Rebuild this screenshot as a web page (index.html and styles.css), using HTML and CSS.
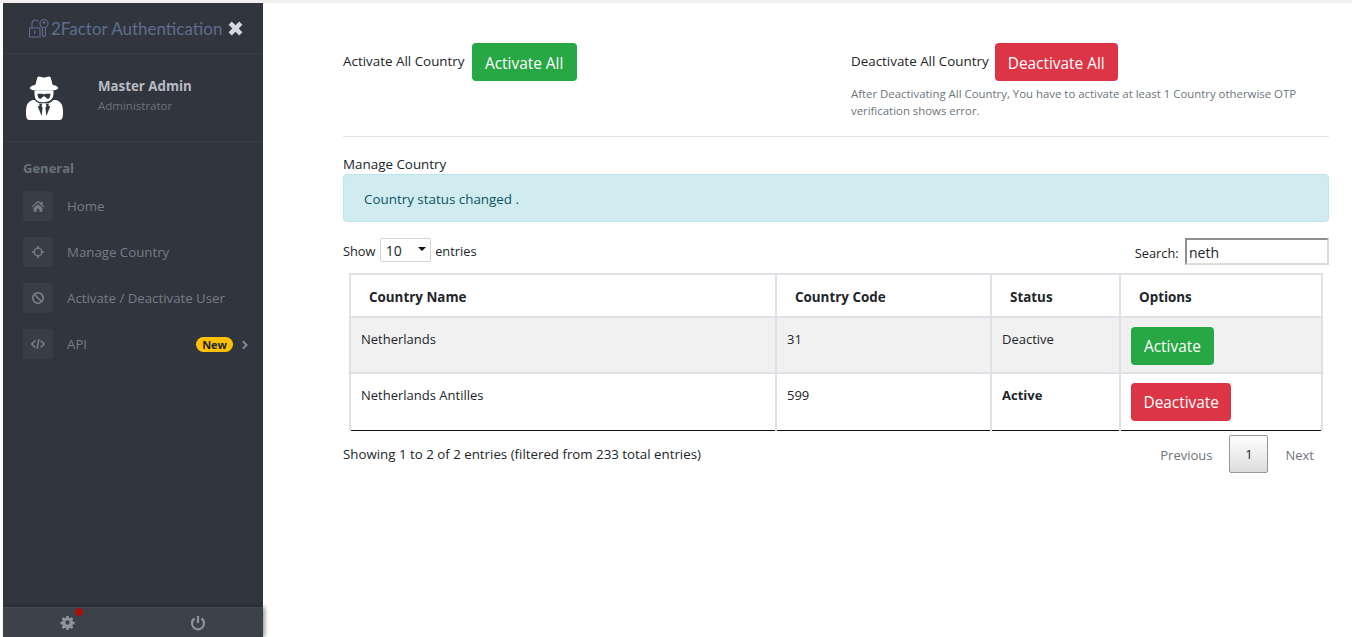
FILE: index.html
```html
<!DOCTYPE html>
<html lang="en">
<head>
    <meta charset="UTF-8">
    <meta name="viewport" content="width=device-width, initial-scale=1.0">
    <title>Manage Country</title>
    <link rel="stylesheet" href="styles.css">
</head>
<body>
    <aside class="sidebar">
        <div class="brand">
            <svg class="brand-logo" viewBox="0 0 20 19" width="20" height="19" fill="none" stroke="#5f6d8f" stroke-width="1.100">
                <path d="M.5 9h10.500v9h-10.500z"/>
                <path d="M3 9v-4.500a3.500 3.500 0 0 1 6.500-1.800"/>
                <path d="M5.700 12v3"/>
                <circle cx="15" cy="4.500" r="4"/>
                <circle cx="15" cy="3.500" r=".8"/>
                <path d="M13.500 8.500v8l1.500 1.500 1.500-1.500v-8"/>
            </svg>
            <span class="brand-name">2Factor Authentication</span>
            <svg class="brand-close" viewBox="0 0 16 16" width="17" height="17"><path d="M1.500 4.500l3-3 3.500 3.500 3.500-3.500 3 3-3.500 3.500 3.500 3.500-3 3-3.500-3.500-3.500 3.500-3-3 3.500-3.500z" fill="#d5d8dd"/></svg>
        </div>
        <div class="profile">
            <svg class="profile-pic" viewBox="0 0 42 46" width="40" height="44" fill="#fff" fill-rule="evenodd">
                <path d="M14 1.500q1-1.500 3-.7 4 1.500 8 0 2-.8 3 .7l2 7.500q6 1.500 6 3.500 0 3-15 3t-15-3q0-2 6-3.500z"/>
                <path d="M11 15.500h20v3q0 8-10 9t-10-9zM14 18.500h6l1 1 1-1h6l-1 4q-1 2-3 1l-2-2h-2l-2 2q-2 1-3-1z"/>
                <path d="M8 25h3q3 3 5 3.500h10q2-.5 5-3.500h3q7 2 7 12 0 4-.5 6-.5 3-3 3h-32q-2.500 0-3-3-.5-2-.5-6 0-10 7-12zM16 29h3l-.5 3 1 1-1 9-4-10 2-1zM26 29h-3l.5 3-1 1 1 9 4-10-2-1z"/>
            </svg>
            <div class="profile-info">
                <div class="profile-name">Master Admin</div>
                <div class="profile-role">Administrator</div>
            </div>
        </div>
        <div class="nav-title">General</div>
        <ul class="nav">
            <li class="nav-item">
                <span class="nav-icon">
                    <svg viewBox="0 0 16 16" width="14" height="14"><path d="M8 2l3 2.500v-1.500h2v3.200l2.500 2.300-1 1-6.500-5.500-6.500 5.500-1-1zM3 10l5-4 5 4v4.500h-3.500v-3.500h-3v3.500h-3.500z"/></svg>
                </span>
                Home
            </li>
            <li class="nav-item">
                <span class="nav-icon">
                    <svg viewBox="0 0 16 16" width="14" height="14"><circle cx="8" cy="8" r="4.500" fill="none" stroke-width="1.500"/><path d="M7.200 1h1.600v4h-1.600zM7.200 11h1.600v4h-1.600zM1 7.200h4v1.600h-4zM11 7.200h4v1.600h-4z"/></svg>
                </span>
                Manage Country
            </li>
            <li class="nav-item">
                <span class="nav-icon">
                    <svg viewBox="0 0 16 16" width="14" height="14"><circle cx="8" cy="8" r="6" fill="none" stroke-width="2"/><path d="M4 4l8 8" stroke-width="2"/></svg>
                </span>
                Activate / Deactivate User
            </li>
            <li class="nav-item">
                <span class="nav-icon">
                    <svg viewBox="0 0 18 16" width="16" height="14"><path d="M6 4l-4 4 4 4M12 4l4 4-4 4" fill="none" stroke-width="2"/><path d="M10 2.500l-2 11" fill="none" stroke-width="1.800"/></svg>
                </span>
                API
                <span class="badge-new">New</span>
                <svg class="nav-arrow" viewBox="0 0 8 12" width="7" height="10"><path d="M2 1.500l4.500 4.500-4.500 4.500" fill="none" stroke="#80858e" stroke-width="2.400"/></svg>
            </li>
        </ul>
        <div class="sidebar-footer">
            <span class="footer-btn">
                <svg class="footer-gear" viewBox="0 0 16 16" width="15" height="15" fill="#8f949c"><path fill-rule="evenodd" d="M6.800 1h2.400l.4 2 1.200.5 1.700-1.100 1.700 1.700-1.100 1.700.5 1.200 2 .4v2.400l-2 .4-.5 1.200 1.100 1.700-1.700 1.700-1.700-1.100-1.200.5-.4 2h-2.400l-.4-2-1.200-.5-1.700 1.100-1.700-1.700 1.100-1.700-.5-1.200-2-.4v-2.400l2-.4.5-1.200-1.100-1.700 1.700-1.700 1.700 1.100 1.200-.5zM8 5.700a2.300 2.300 0 1 0 0 4.600 2.300 2.300 0 0 0 0-4.600z"/></svg>
                <span class="footer-dot"></span>
            </span>
            <span class="footer-btn">
                <svg viewBox="0 0 16 16" width="16" height="16" fill="none" stroke="#8f949c" stroke-width="2.200"><path d="M4.500 3.500a6 6 0 1 0 7 0"/><path d="M8 1v7"/></svg>
            </span>
        </div>
    </aside>

    <main class="content">
        <div class="bulk-row">
            <div class="bulk-col">
                <div class="bulk-action">
                    <span>Activate All Country</span>
                    <button class="btn btn-green">Activate All</button>
                </div>
            </div>
            <div class="bulk-col">
                <div class="bulk-action">
                    <span>Deactivate All Country</span>
                    <button class="btn btn-red">Deactivate All</button>
                </div>
                <p class="hint">After Deactivating All Country, You have to activate at least 1 Country otherwise OTP verification shows error.</p>
            </div>
        </div>
        <hr class="divider">
        <div class="section-title">Manage Country</div>
        <div class="alert">Country status changed .</div>

        <div class="table-top">
            <div class="length">Show
                <span class="select-wrap"><select class="length-select"><option>10</option></select></span>
                entries</div>
            <label class="search">Search: <input class="search-input" type="text" value="neth"></label>
        </div>

        <table class="country-table">
            <thead>
                <tr>
                    <th class="col-name">Country Name</th>
                    <th class="col-code">Country Code</th>
                    <th class="col-status">Status</th>
                    <th class="col-options">Options</th>
                </tr>
            </thead>
            <tbody>
                <tr class="odd">
                    <td>Netherlands</td>
                    <td>31</td>
                    <td>Deactive</td>
                    <td><button class="btn btn-green">Activate</button></td>
                </tr>
                <tr>
                    <td>Netherlands Antilles</td>
                    <td>599</td>
                    <td><b>Active</b></td>
                    <td><button class="btn btn-red">Deactivate</button></td>
                </tr>
            </tbody>
        </table>

        <div class="table-bottom">
            <div class="info">Showing 1 to 2 of 2 entries (filtered from 233 total entries)</div>
            <div class="paging">
                <span class="page-link">Previous</span>
                <span class="page-current">1</span>
                <span class="page-link">Next</span>
            </div>
        </div>
    </main>
</body>
</html>
```

FILE: styles.css
```css
html, body {
    height: 100%;
}
body {
    margin: 0;
    box-sizing: border-box;
    height: 637px;
    overflow: hidden;
    display: flex;
    background: #fff;
    border-top: 3px solid #f0f0f0;
    font-family: "Open Sans", "Noto Sans", sans-serif;
    font-size: 13.4px;
    color: #212529;
}

/* sidebar */
.sidebar {
    position: relative;
    flex: 0 0 260px;
    margin-left: 3px;
    background: #31353d;
    color: #787c85;
}
.brand {
    display: flex;
    align-items: center;
    height: 50px;
    padding-left: 26px;
    border-bottom: 1px solid #393d45;
}
.brand-logo {
    flex: none;
    margin: 1px 2px 0 0;
}
.brand-name {
    font-family: "Lato", sans-serif;
    font-size: 17px;
    color: #5f6d8f;
    white-space: nowrap;
}
.brand-close {
    margin-left: 5px;
}
.profile {
    display: flex;
    align-items: center;
    height: 87px;
    padding-left: 21px;
    border-bottom: 1px solid #393d45;
}
.profile-pic {
    flex: none;
}
.profile-info {
    margin-left: 34px;
    margin-top: -4px;
}
.profile-name {
    font-weight: 700;
    color: #b8bcc3;
    font-size: 13.300px;
    line-height: 20px;
}
.profile-role {
    font-size: 11.500px;
    line-height: 19px;
    color: #6f737b;
}
.nav-title {
    padding: 17px 0 0 20px;
    font-weight: 700;
    font-size: 13px;
    line-height: 18px;
    color: #66737d;
}
.nav {
    list-style: none;
    margin: 0;
    padding: 14px 0 0 20px;
}
.nav-item {
    display: flex;
    align-items: center;
    height: 30px;
    margin-bottom: 16px;
    font-size: 13.250px;
}
.nav-icon {
    display: flex;
    align-items: center;
    justify-content: center;
    flex: none;
    width: 30px;
    height: 30px;
    margin-right: 14px;
    border-radius: 3px;
    background: #393d45;
}
.nav-icon svg {
    fill: #787c85;
    stroke: #787c85;
    stroke-width: 0;
}
.nav-icon svg [stroke-width] {
    stroke: #787c85;
}
.badge-new {
    margin-left: auto;
    padding: 0 6px;
    border-radius: 8px;
    background: #ffc107;
    color: #212529;
    font-size: 11px;
    font-weight: 700;
    line-height: 15px;
}
.nav-arrow {
    margin: 2px 15px 0 8px;
}
.sidebar-footer {
    position: absolute;
    left: 0;
    right: 0;
    bottom: 0;
    display: flex;
    height: 29px;
    background: #3d4149;
    border-top: 1px solid #454951;
    box-shadow: 2px 0 4px rgba(0, 0, 0, 0.4);
}
.footer-btn {
    position: relative;
    flex: 1;
    display: flex;
    align-items: center;
    justify-content: center;
}
.footer-gear {
    margin-right: 2px;
}
.footer-dot {
    position: absolute;
    left: 72px;
    top: 0;
    width: 8px;
    height: 8px;
    border-radius: 50%;
    background: #a90f0f;
}

/* main area */
.content {
    flex: 1;
    min-width: 0;
    padding: 40px 23px 0 80px;
}
.bulk-row {
    display: flex;
    height: 77px;
}
.bulk-col {
    flex: 0 0 508px;
}
.bulk-col:last-child {
    flex: 1;
}
.bulk-action {
    display: flex;
    align-items: center;
}
.bulk-action span {
    margin: -2px 7px 0 0;
}
.bulk-action .btn {
    padding: 2px 12.500px 0;
}
.bulk-col:last-child .bulk-action span {
    margin-right: 6px;
}
.bulk-col:last-child .btn {
    padding: 2px 12px 0;
}
.btn {
    height: 38px;
    padding: 0 12px;
    border: 1px solid transparent;
    border-radius: 4px;
    font-family: inherit;
    font-size: 15.400px;
    color: #fff;
}
.btn-green {
    background: #28a745;
}
.btn-red {
    background: #dc3545;
}
.hint {
    margin: 4px 0 0;
    font-size: 11.400px;
    line-height: 17px;
    color: #6c757d;
}
.divider {
    margin: 16px 0 0;
    border: 0;
    border-top: 1px solid #e5e5e5;
}
.section-title {
    margin-top: 18px;
    line-height: 19px;
}
.alert {
    padding: 0 20px;
    height: 46px;
    line-height: 48px;
    border: 1px solid #bee5eb;
    border-radius: 4px;
    background: #d1ecf1;
    color: #0c5460;
}
.table-top {
    display: flex;
    justify-content: space-between;
    margin-top: 16px;
    height: 35px;
    font-size: 12.800px;
}
.select-wrap {
    position: relative;
    display: inline-block;
    margin: 0 1px;
}
.select-wrap::after {
    content: "";
    position: absolute;
    right: 5px;
    top: 9px;
    border-top: 4px solid #111;
    border-left: 4px solid transparent;
    border-right: 4px solid transparent;
}
.length-select {
    appearance: none;
    width: 51px;
    height: 24px;
    padding-left: 5px;
    background: #fff;
    border: 1px solid #ced4da;
    border-radius: 2px;
    font-family: inherit;
    font-size: 14px;
    color: #212529;
}
.search-input {
    box-sizing: border-box;
    width: 144px;
    height: 27px;
    margin-left: 3px;
    padding: 3px 2px 1px;
    border: 2px solid #dcdcdc;
    border-top-color: #8f8f8f;
    border-left-color: #8f8f8f;
    font-family: inherit;
    font-size: 14px;
    color: #212529;
}
.country-table {
    width: 974px;
    margin: 0 6px;
    border-collapse: collapse;
    table-layout: fixed;
}
.col-name { width: 426px; }
.col-code { width: 215px; }
.col-status { width: 129px; }
.country-table th,
.country-table td {
    box-sizing: border-box;
    border: 2px solid #dee2e6;
    text-align: left;
    vertical-align: top;
}
.country-table th {
    height: 43px;
    padding: 2px 18px 0;
    vertical-align: middle;
    font-weight: 700;
    border-bottom: 1px solid #111;
}
.country-table td {
    height: 56px;
    padding: 8px 10px 0;
    line-height: 26px;
    font-size: 13px;
}
.country-table td:last-child {
    padding-top: 9px;
}
.country-table .btn-red {
    padding: 0 11.500px;
}
.country-table tbody tr:last-child td {
    height: 57px;
    border-bottom: 1px solid #111;
}
.odd {
    background: #f1f1f1;
}
.table-bottom {
    display: flex;
    justify-content: space-between;
    margin-top: 4px;
}
.info {
    padding-top: 10px;
    font-size: 13.300px;
}
.paging {
    display: flex;
    align-items: center;
    padding-right: 3px;
    font-size: 13px;
}
.page-link {
    padding: 2px 12px 0;
    color: #6c757d;
}
.page-current {
    box-sizing: border-box;
    width: 39px;
    height: 38px;
    margin: 0 5px;
    border: 1px solid #979797;
    border-radius: 2px;
    background: linear-gradient(#fff, #dcdcdc);
    text-align: center;
    line-height: 36px;
}
```
